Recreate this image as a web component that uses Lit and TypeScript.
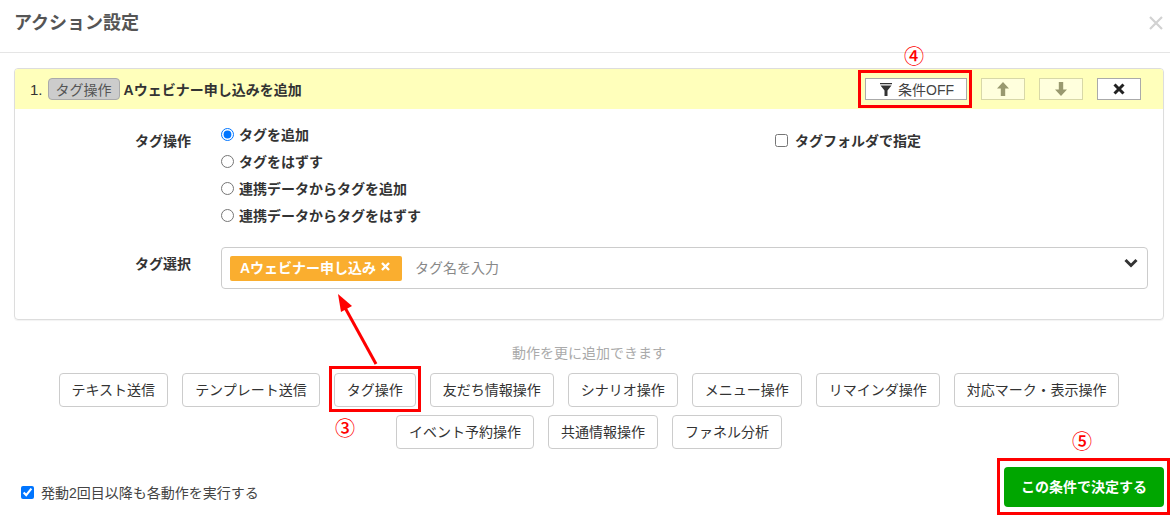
import { LitElement, html, css } from "lit";
import { customElement } from "lit/decorators.js";

const ACTIONS_1 = ["テキスト送信", "テンプレート送信", "タグ操作", "友だち情報操作", "シナリオ操作", "メニュー操作", "リマインダ操作", "対応マーク・表示操作", "イベント予約操作", "共通情報操作", "ファネル分析"];
const RADIOS = ["タグを追加", "タグをはずす", "連携データからタグを追加", "連携データからタグをはずす"];

@customElement("app-root")
export class AppRoot extends LitElement {
  static styles = css`
    :host {
      display: block;
      position: relative;
      width: 1170px;
      height: 524px;
      overflow: hidden;
      background: #fff;
      color: #333;
      font-family: "Liberation Sans", "Noto Sans CJK JP", sans-serif;
      font-size: 14px;
    }
    * { box-sizing: border-box; }
    .head {
      height: 53px;
      border-bottom: 1px solid #e5e5e5;
      display: flex;
      align-items: center;
      justify-content: space-between;
      padding: 0 7px 6px 14px;
    }
    .title { font-size: 18px; font-weight: 700; color: #555; line-height: 24px; }
    .close { width: 14px; height: 14px; display: block; margin-right: 0; }
    .main { padding: 15px 6px 0 14px; }
    .panel {
      width: 1150px;
      height: 252px;
      border: 1px solid #ddd;
      border-radius: 4px;
      overflow: hidden;
      box-shadow: 0 1px 1px rgba(0,0,0,.05);
    }
    .phead {
      height: 40px;
      background: #ffffbb;
      display: flex;
      align-items: center;
      padding: 0 22px 0 15px;
    }
    .num { margin-right: 5px; font-size: 15px; }
    .badge {
      width: 72px;
      height: 22px;
      background: #ccc;
      border: 1px solid #aaa;
      border-radius: 4px;
      color: #555;
      display: flex;
      align-items: center;
      justify-content: center;
      margin-right: 4px;
    }
    .pname { font-weight: 700; flex: 1; }
    .tool {
      height: 22px;
      width: 44px;
      border: 1px solid #aaa;
      background: #fff;
      display: flex;
      align-items: center;
      justify-content: center;
      margin-left: 14px;
      padding: 0;
    }
    .tool.dim { background: #ffffdd; border-color: #d8d8a8; }
    .tool.cond { width: 102px; gap: 6px; color: #444; font: inherit; padding-left: 2px; }
    .form {
      display: grid;
      grid-template-columns: 176px 524px 1fr;
      column-gap: 30px;
      padding: 15px 0 0 0;
    }
    .lbl { font-weight: 700; text-align: right; color: #333; }
    .radios { display: flex; flex-direction: column; gap: 7px; }
    .radio { display: flex; align-items: center; height: 20px; font-weight: 700; color: #333; gap: 5px; }
    input { margin: 0; width: 13px; height: 13px; flex: none; }
    .f1 { padding-top: 7px; line-height: 20px; }
    .f2 { padding-top: 6px; display: flex; align-items: center; height: 26px; gap: 7px; font-weight: 700; }
    .sel-row {
      display: grid;
      grid-template-columns: 176px 927px;
      column-gap: 30px;
      margin-top: 22px;
    }
    .sel-lbl { padding-top: 7px; line-height: 20px; }
    .select {
      height: 42px;
      border: 1px solid #ccc;
      border-radius: 4px;
      display: flex;
      align-items: center;
      padding: 0 9px 0 8px;
    }
    .chip {
      height: 25px;
      width: 172px;
      background: #faae2f;
      border-radius: 2px;
      color: #fff;
      font-weight: 700;
      display: flex;
      align-items: center;
      padding: 0 0 3px 10px;
      gap: 5px;
    }
    .ph { margin: -3px 0 0 13px; color: #888; flex: 1; }
    .chev { display: block; margin-top: -10px; }
    .hint { text-align: center; color: #aaa; margin-top: 23px; line-height: 20px; }
    .actions {
      display: flex;
      flex-wrap: wrap;
      justify-content: center;
      gap: 8px 14px;
      margin-top: 10px;
    }
    .act {
      height: 34px;
      padding: 0 12px 2px;
      border: 1px solid #ccc;
      border-radius: 4px;
      background: #fff;
      color: #333;
      font: inherit;
      white-space: nowrap;
    }
    .foot {
      display: flex;
      align-items: center;
      justify-content: space-between;
      margin-top: 18px;
      padding-left: 7px;
    }
    .rep { display: flex; align-items: center; gap: 7px; color: #444; margin-top: 10px; }
    .go {
      width: 160px;
      height: 40px;
      padding: 0 0 2px;
      background: #00a600;
      border: 0;
      border-radius: 4px;
      color: #fff;
      font: inherit;
      font-weight: 700;
    }
    .mark { position: absolute; border: 3px solid #f00; pointer-events: none; }
    .m4 { left: 858px; top: 70px; width: 114px; height: 38px; }
    .m3 { left: 329px; top: 366px; width: 92px; height: 46px; }
    .m5 { left: 997px; top: 458px; width: 173px; height: 57px; }
    .n { position: absolute; color: #f00; font-size: 20px; font-weight: 500; line-height: 20px; width: 20px; text-align: center; }
    .n3 { left: 335px; top: 419px; }
    .n4 { left: 904px; top: 47px; }
    .n5 { left: 1072px; top: 432px; }
    .arrow { position: absolute; left: 330px; top: 288px; }
  `;

  render() {
    return html`
      <div class="head">
        <div class="title">アクション設定</div>
        <svg class="close" viewBox="0 0 14 14"><path d="M1 1l12 12M13 1L1 13" stroke="#d2d2d2" stroke-width="2.2" fill="none"/></svg>
      </div>
      <div class="main">
        <div class="panel">
          <div class="phead">
            <span class="num">1.</span>
            <span class="badge">タグ操作</span>
            <span class="pname">Aウェビナー申し込みを追加</span>
            <button class="tool cond">
              <svg width="12" height="13" viewBox="0 0 12 13"><path d="M0 0h12v1.2H0zM0.5 2.6h11L7.5 7.5V13h-3V7.5z" fill="#333"/></svg>
              <span>条件OFF</span>
            </button>
            <span class="tool dim"><svg width="12" height="14" viewBox="0 0 12 14"><path d="M6 0l6 6.5H8.2V14H3.8V6.5H0z" fill="#99996f"/></svg></span>
            <span class="tool dim"><svg width="12" height="14" viewBox="0 0 12 14"><path d="M6 14L0 7.5h3.8V0h4.4v7.5H12z" fill="#99996f"/></svg></span>
            <span class="tool"><svg width="12" height="12" viewBox="0 0 12 12"><path d="M1.5 1.5l9 9M10.5 1.5l-9 9" stroke="#222" stroke-width="3" fill="none"/></svg></span>
          </div>
          <div class="form">
            <div class="lbl f1">タグ操作</div>
            <div class="radios">
              ${RADIOS.map((r, i) => html`<label class="radio"><input type="radio" name="op" ?checked=${i === 0} />${r}</label>`)}
            </div>
            <label class="f2"><input type="checkbox" />タグフォルダで指定</label>
          </div>
          <div class="sel-row">
            <div class="lbl sel-lbl">タグ選択</div>
            <div class="select">
              <span class="chip">Aウェビナー申し込み
                <svg width="9" height="9" viewBox="0 0 9 9"><path d="M1 1l7 7M8 1L1 8" stroke="#fff" stroke-width="2.4" fill="none"/></svg>
              </span>
              <span class="ph">タグ名を入力</span>
              <svg class="chev" width="14" height="10" viewBox="0 0 14 10"><path d="M1.5 2L7 7.5 12.5 2" stroke="#333" stroke-width="3" fill="none"/></svg>
            </div>
          </div>
        </div>
        <div class="hint">動作を更に追加できます</div>
        <div class="actions">
          ${ACTIONS_1.map((a) => html`<button class="act">${a}</button>`)}
        </div>
        <div class="foot">
          <label class="rep"><input type="checkbox" checked />発動2回目以降も各動作を実行する</label>
          <button class="go">この条件で決定する</button>
        </div>
      </div>
      <div class="mark m4"></div>
      <div class="mark m3"></div>
      <div class="mark m5"></div>
      <div class="n n3">③</div>
      <div class="n n4">④</div>
      <div class="n n5">⑤</div>
      <svg class="arrow" width="52" height="80" viewBox="0 0 52 80">
        <path d="M46 76L13 16" stroke="#f00" stroke-width="3" fill="none"/>
        <path d="M8 6l14 12-11 6z" fill="#f00"/>
      </svg>
    `;
  }
}
